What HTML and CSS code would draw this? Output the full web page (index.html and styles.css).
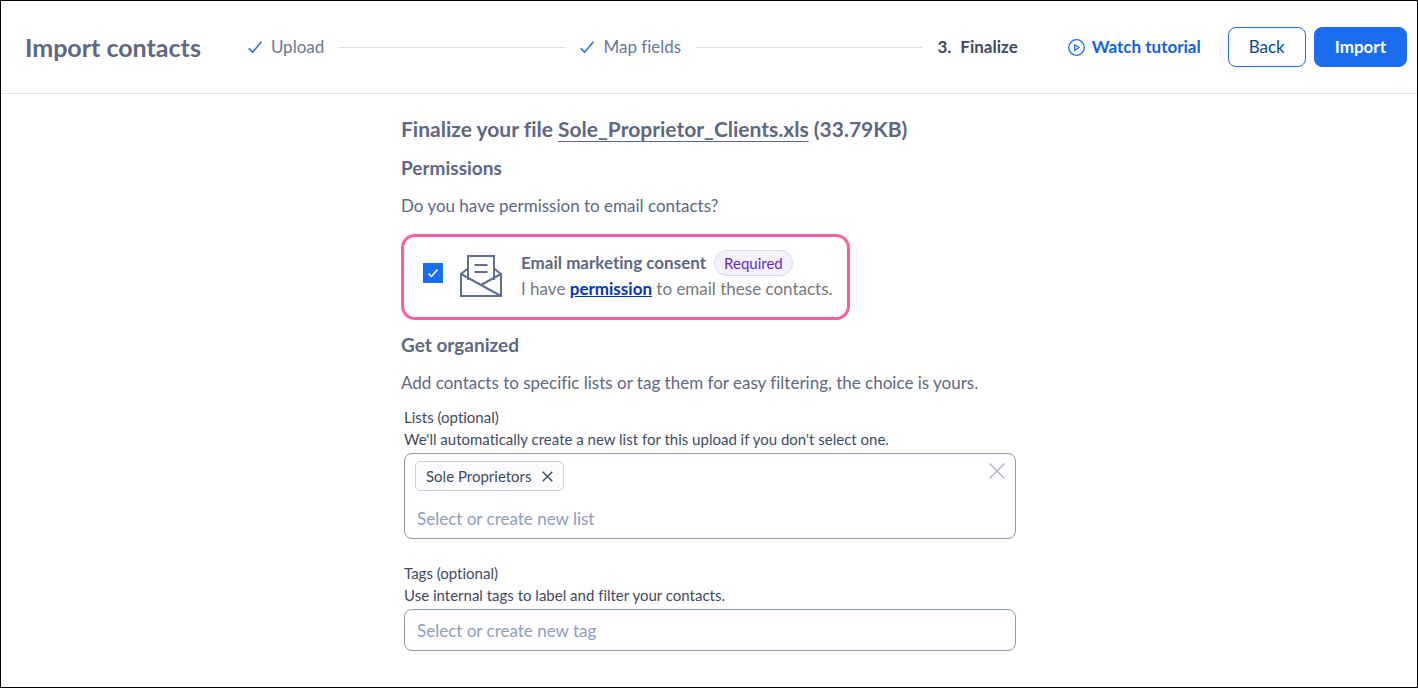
FILE: index.html
```html
<!DOCTYPE html>
<html lang="en">
<head>
<meta charset="utf-8">
<meta name="viewport" content="width=device-width, initial-scale=1">
<title>Import contacts</title>
<link rel="stylesheet" href="styles.css">
</head>
<body>
<div class="page">
  <header class="topbar">
    <h1 class="topbar-title">Import contacts</h1>
    <ol class="steps">
      <li class="step">
        <svg class="step-check" viewBox="0 0 14 12" aria-hidden="true"><path d="M0.7 7.4 4.6 11.2 13.4 0.8"/></svg>
        <span>Upload</span>
      </li>
      <li class="step-line" aria-hidden="true"></li>
      <li class="step">
        <svg class="step-check" viewBox="0 0 14 12" aria-hidden="true"><path d="M0.7 7.4 4.6 11.2 13.4 0.8"/></svg>
        <span>Map fields</span>
      </li>
      <li class="step-line" aria-hidden="true"></li>
      <li class="step step-current" aria-current="step"><span>3.</span><span>Finalize</span></li>
    </ol>
    <a class="tutorial" href="#tutorial">
      <svg class="tutorial-icon" viewBox="0 0 17 17" aria-hidden="true"><circle cx="8.5" cy="8.5" r="7.8"/><path d="M6.7 5.7v5.6l4.5-2.8z"/></svg>
      <span>Watch tutorial</span>
    </a>
    <div class="actions">
      <button class="btn btn-outline" type="button">Back</button>
      <button class="btn btn-primary" type="button">Import</button>
    </div>
  </header>

  <main class="content">
    <h2 class="file-title">Finalize your file <span class="file-name">Sole_Proprietor_Clients.xls</span> (33.79KB)</h2>

    <section>
      <h3 class="section-title">Permissions</h3>
      <p class="section-text">Do you have permission to email contacts?</p>
      <div class="consent">
        <input class="consent-box" type="checkbox" id="consent" checked>
        <svg class="consent-icon" viewBox="0 0 42 43" aria-hidden="true">
          <path d="M8 26V2h26v24M8 14.5 1 20v22h40V20l-7-5.500M1 20l40 22M21 31 41 20"/>
          <path d="M14.500 11h13M14.500 18h13"/>
        </svg>
        <div class="consent-body">
          <div class="consent-head">
            <label class="consent-title" for="consent">Email marketing consent</label>
            <span class="badge">Required</span>
          </div>
          <p class="consent-text">I have <a class="consent-link" href="#permission">permission</a> to email these contacts.</p>
        </div>
      </div>
    </section>

    <section>
      <h3 class="section-title">Get organized</h3>
      <p class="section-text">Add contacts to specific lists or tag them for easy filtering, the choice is yours.</p>

      <div class="field">
        <label class="field-label" for="lists">Lists (optional)</label>
        <p class="field-hint" id="lists-hint">We'll automatically create a new list for this upload if you don't select one.</p>
        <div class="picker picker-filled">
          <div class="picker-main">
            <span class="chip">Sole Proprietors
              <button class="chip-remove" type="button" aria-label="Remove Sole Proprietors"><svg class="icon-x" viewBox="0 0 11 11" aria-hidden="true"><path d="M0.700 0.700l9.600 9.600M10.300 0.700l-9.600 9.600"/></svg></button>
            </span>
            <input class="picker-input" id="lists" type="text" placeholder="Select or create new list" aria-describedby="lists-hint">
          </div>
          <button class="picker-clear" type="button" aria-label="Clear lists"><svg class="icon-clear" viewBox="0 0 16 16" aria-hidden="true"><path d="M0.500 0.500l15 15M15.500 0.500l-15 15"/></svg></button>
        </div>
      </div>

      <div class="field">
        <label class="field-label" for="tags">Tags (optional)</label>
        <p class="field-hint" id="tags-hint">Use internal tags to label and filter your contacts.</p>
        <div class="picker">
          <input class="picker-input" id="tags" type="text" placeholder="Select or create new tag" aria-describedby="tags-hint">
        </div>
      </div>
    </section>
  </main>
</div>
</body>
</html>
```
FILE: styles.css
```css
* {
  box-sizing: border-box;
}

body {
  margin: 0;
  background: #fff;
  color: #5d6883;
  font-family: Lato, "Open Sans", sans-serif;
  font-size: 17px;
  font-variant-ligatures: none;
  line-height: 24px;
}

h1, h2, h3, p, ol {
  margin: 0;
  padding: 0;
}

button, input {
  font: inherit;
}

svg {
  display: block;
  flex: none;
  fill: none;
}

.page {
  min-height: 100vh;
  border: 1px solid #000;
}

.topbar {
  display: flex;
  align-items: center;
  padding: 26px 10px 26px 24px;
  border-bottom: 1px solid #dcdfea;
}

.topbar-title {
  font-size: 25px;
  line-height: 32px;
  white-space: nowrap;
}

.steps {
  display: flex;
  flex: 1;
  align-items: center;
  gap: 15px;
  margin: 0 50px 0 47px;
  list-style: none;
}

.step {
  display: flex;
  align-items: center;
  gap: 9px;
  color: #6b7794;
  white-space: nowrap;
}

.step-current {
  color: #3f4a63;
  font-weight: 700;
}

.step-line {
  flex: 1;
  height: 1px;
  background: #dcdfea;
}

.step-check {
  width: 14px;
  height: 12px;
  stroke: #1a6dee;
  stroke-width: 1.5;
}

.tutorial {
  display: flex;
  align-items: center;
  gap: 7px;
  color: #0f62de;
  font-weight: 700;
  text-decoration: none;
  white-space: nowrap;
}

.tutorial-icon {
  width: 17px;
  height: 17px;
  stroke: #1a6dee;
  stroke-width: 1.3;
  stroke-linejoin: round;
}

.actions {
  display: flex;
  gap: 8px;
  margin-left: 27px;
}

.btn {
  height: 40px;
  padding: 0 20px;
  border: 1px solid #1a6dee;
  border-radius: 8px;
  cursor: pointer;
}

.btn-outline {
  background: #fff;
  color: #0a46a5;
}

.btn-primary {
  background: #1a6dee;
  color: #fff;
  font-weight: 700;
}

.content {
  max-width: 616px;
  margin: 0 auto;
  padding: 21px 0 12px;
}

.file-title {
  font-size: 21px;
  line-height: 28px;
}

.file-name {
  text-decoration: underline;
  text-decoration-thickness: 1px;
  text-underline-offset: 4px;
}

.section-title {
  margin-top: 13px;
  font-size: 19px;
  line-height: 24px;
}

.section-text {
  margin-top: 14px;
}

.consent {
  display: flex;
  align-items: center;
  width: fit-content;
  margin-top: 16px;
  padding: 13px 14px 16px 19px;
  border: 3px solid #fd5ea2;
  border-radius: 14px;
}

.consent-box {
  flex: none;
  width: 20px;
  height: 20px;
  margin: 0 17px 5px 0;
  appearance: none;
  background: #1a6dee url("data:image/svg+xml,%3Csvg xmlns='http://www.w3.org/2000/svg' viewBox='0 0 20 20'%3E%3Cpath d='M5.500 10.500l3 3 6-7' fill='none' stroke='white' stroke-width='1.500'/%3E%3C/svg%3E");
}

.consent-icon {
  width: 42px;
  height: 43px;
  margin-right: 19px;
  stroke: #5f6e8e;
  stroke-width: 2;
}

.consent-head {
  display: flex;
  align-items: center;
  gap: 8px;
}

.consent-title {
  font-weight: 700;
}

.badge {
  padding: 0 9px;
  border: 1px solid #dcd3fb;
  border-radius: 13px;
  background: #f5f2ff;
  color: #6426d2;
  font-size: 15px;
}

.consent-text {
  color: #777;
  line-height: 25px;
}

.consent-link {
  color: #0636b8;
  font-weight: 700;
}

.field {
  margin: 11px 0 23px 3px;
  color: #3f4a63;
  font-size: 15px;
  line-height: 22px;
}

.field-label {
  display: block;
}

.picker {
  display: flex;
  align-items: flex-start;
  margin: 3px 1px 0 0;
  padding: 6px 10px;
  border: 1px solid #8b99b8;
  border-radius: 8px;
}

.picker-filled {
  padding-top: 7px;
}

.picker-main {
  display: flex;
  flex: 1;
  flex-direction: column;
  align-items: flex-start;
  gap: 13px;
}

.picker-input {
  width: 100%;
  height: 28px;
  padding: 0 2px;
  border: 0;
  outline: 0;
  background: none;
  color: #3f4a63;
  font-size: 17px;
}

.picker-input::placeholder {
  color: #8f9cbc;
  opacity: 1;
}

.picker-clear, .chip-remove {
  padding: 0;
  border: 0;
  background: none;
  cursor: pointer;
}

.picker-clear {
  margin-top: 2px;
}

.icon-clear {
  width: 16px;
  height: 16px;
  stroke: #a7afc2;
  stroke-width: 1.3;
}

.chip {
  display: flex;
  align-items: center;
  gap: 10px;
  padding: 3px 10px;
  border: 1px solid #c9d1e2;
  border-radius: 5px;
  background: #fbfbfd;
}

.icon-x {
  width: 11px;
  height: 11px;
  stroke: #3f4a63;
  stroke-width: 1.4;
}
```
